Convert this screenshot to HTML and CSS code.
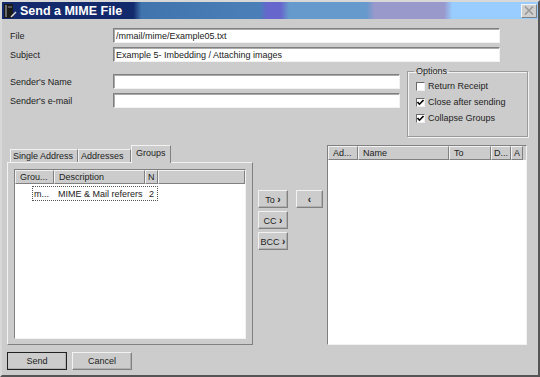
FILE: index.html
```html
<!DOCTYPE html>
<html lang="en">
<head>
  <meta charset="UTF-8">
  <meta name="viewport" content="width=device-width, initial-scale=1.0">
  <title>Send a MIME File</title>
  <link rel="stylesheet" href="styles.css">
</head>
<body>
  <div class="window">
    <div class="titlebar">
      <svg class="app-icon" width="14" height="16" viewBox="0 0 14 16">
        <rect x="1" y="1" width="9" height="14" fill="#1a1a1a"/>
        <rect x="2" y="2" width="2" height="12" fill="#6a6a6a"/>
        <rect x="5" y="3" width="4" height="2" fill="#555"/>
        <path d="M8 14 L13 9" stroke="#d8d8d8" stroke-width="1.5"/>
        <path d="M9 11 L11 13" stroke="#999" stroke-width="1"/>
      </svg>
      <span class="title">Send a MIME File</span>
      <span class="close-btn">
        <svg width="10" height="9" viewBox="0 0 10 9">
          <path d="M1 0.5 L9 8.5 M9 0.5 L1 8.5" stroke="#9a9a9a" stroke-width="1.6"/>
        </svg>
      </span>
    </div>

    <div class="content">
      <div class="field-row">
        <label class="field-label" for="file">File</label>
        <input class="text-input input-wide" id="file" value="/mmail/mime/Example05.txt">
      </div>
      <div class="field-row gap-small">
        <label class="field-label" for="subject">Subject</label>
        <input class="text-input input-wide" id="subject" value="Example 5- Imbedding / Attaching images">
      </div>

      <div class="sender-block">
        <div class="sender-fields">
          <div class="field-row">
            <label class="field-label" for="sname">Sender's Name</label>
            <input class="text-input input-mid" id="sname">
          </div>
          <div class="field-row gap-small">
            <label class="field-label" for="smail">Sender's e-mail</label>
            <input class="text-input input-mid" id="smail">
          </div>
        </div>
        <fieldset class="options">
          <legend>Options</legend>
          <div class="check-row"><span class="checkbox"></span>Return Receipt</div>
          <div class="check-row"><span class="checkbox"><svg width="7" height="7" viewBox="0 0 7 7"><path d="M0.5 3 L2.5 5.2 L6.5 1" fill="none" stroke="#000" stroke-width="1.6"/></svg></span>Close after sending</div>
          <div class="check-row"><span class="checkbox"><svg width="7" height="7" viewBox="0 0 7 7"><path d="M0.5 3 L2.5 5.2 L6.5 1" fill="none" stroke="#000" stroke-width="1.6"/></svg></span>Collapse Groups</div>
        </fieldset>
      </div>

      <div class="middle">
        <div class="tabs">
          <div class="tab-strip">
            <span class="tab">Single Address</span>
            <span class="tab">Addresses</span>
            <span class="tab tab-active">Groups</span>
          </div>
          <div class="tab-panel">
            <div class="list groups-list">
              <div class="list-header">
                <span class="head-cell col-grp">Grou...</span>
                <span class="head-cell col-desc">Description</span>
                <span class="head-cell col-n">N</span>
                <span class="head-cell col-fill"></span>
              </div>
              <div class="list-row">
                <span class="row-item">
                  <span class="cell-grp">m...</span>
                  <span class="cell-desc">MIME &amp; Mail referers</span>
                  <span class="cell-n">2</span>
                </span>
              </div>
            </div>
          </div>
        </div>

        <div class="move-buttons">
          <button class="btn btn-move">To <b>›</b></button>
          <button class="btn btn-move">CC <b>›</b></button>
          <button class="btn btn-move">BCC <b>›</b></button>
        </div>

        <div class="back-button">
          <button class="btn btn-back"><b>‹</b></button>
        </div>

        <div class="list recipients-list">
          <div class="list-header">
            <span class="head-cell col-ad">Ad...</span>
            <span class="head-cell col-name">Name</span>
            <span class="head-cell col-to">To</span>
            <span class="head-cell col-d">D...</span>
            <span class="head-cell col-a">A</span>
          </div>
        </div>
      </div>

      <div class="footer">
        <button class="btn btn-footer btn-default">Send</button>
        <button class="btn btn-footer">Cancel</button>
      </div>
    </div>
  </div>
</body>
</html>
```

FILE: styles.css
```css
body {
  margin: 0;
  font-family: "Liberation Sans", Arial, sans-serif;
  font-size: 9px;
  color: #222;
  background: #cccccc;
}
.window {
  width: 540px;
  height: 377px;
  box-sizing: border-box;
  border: 2px solid;
  border-color: #d8d8d8 #555 #555 #d8d8d8;
  background: #cccccc;
  overflow: hidden;
}

/* title bar */
.titlebar {
  height: 17px;
  display: flex;
  align-items: center;
  background: linear-gradient(to right,
    #12296c 0%, #12296c 24.5%,
    #4174ad 26%, #4a7fb8 48%,
    #6666cc 49.5%, #6666cc 52%,
    #6699cc 53.5%, #6699cc 68%,
    #9999cc 69.5%, #9999cc 82.5%,
    #99ccff 84%, #99ccff 100%);
}
.app-icon {
  margin-left: 1px;
  flex: none;
}
.title {
  margin-left: 3px;
  color: #fff;
  font-weight: bold;
  font-size: 12.5px;
}
.close-btn {
  margin-left: auto;
  margin-right: 1px;
  width: 16px;
  height: 14px;
  box-sizing: border-box;
  display: flex;
  align-items: center;
  justify-content: center;
  background: #cfcfcf;
  border: 1px solid;
  border-color: #f4f4f4 #808080 #808080 #f4f4f4;
}

/* form rows */
.content {
  padding: 9px 10px 0 5px;
}
.field-row {
  display: flex;
  align-items: center;
  height: 15px;
}
.gap-small {
  margin-top: 4px;
}
.field-label {
  width: 103px;
  margin-left: 3px;
  flex: none;
}
.text-input {
  height: 15px;
  box-sizing: border-box;
  margin: 0;
  padding: 0 2px;
  font: inherit;
  color: #222;
  background: #fff;
  border: 1px solid;
  border-color: #808080 #f2f2f2 #f2f2f2 #808080;
  box-shadow: inset 1px 1px 0 #aaaaaa;
  outline: none;
}
.input-wide {
  width: 387px;
}
.input-mid {
  width: 287px;
}

/* sender + options */
.sender-block {
  display: flex;
  margin-top: 4px;
}
.sender-fields {
  width: 393px;
  padding-top: 8px;
}
.options {
  margin: 0 0 0 7px;
  width: 121px;
  height: 71px;
  box-sizing: border-box;
  padding: 1px 0 0 8px;
  border: 1px solid #9a9a9a;
  box-shadow: inset 1px 1px 0 #f2f2f2, 1px 1px 0 #f2f2f2;
}
.options legend {
  padding: 0 2px;
  margin-left: -2px;
  line-height: 11px;
}
.check-row {
  display: flex;
  align-items: center;
  height: 16px;
}
.checkbox {
  width: 9px;
  height: 9px;
  box-sizing: border-box;
  margin-right: 3px;
  display: flex;
  align-items: center;
  justify-content: center;
  background: #fff;
  border: 1px solid;
  border-color: #6a6a6a #eee #eee #6a6a6a;
}

/* middle area */
.middle {
  display: flex;
  margin-top: 8px;
  height: 200px;
}
.tabs {
  width: 246px;
  display: flex;
  flex-direction: column;
}
.tab-strip {
  display: flex;
  align-items: flex-end;
  height: 17px;
  padding-left: 3px;
  position: relative;
  z-index: 1;
}
.tab {
  height: 13px;
  box-sizing: border-box;
  padding: 0 2px;
  line-height: 12px;
  border: 1px solid;
  border-bottom: none;
  border-color: #f2f2f2 #808080 #f2f2f2 #f2f2f2;
  background: #cccccc;
}
.tab:nth-child(1) {
  width: 68px;
}
.tab:nth-child(2) {
  width: 53px;
}
.tab-active {
  width: 40px;
  height: 18px;
  margin-bottom: -1px;
  line-height: 14px;
  padding-left: 4px;
}
.tab-panel {
  flex: 1;
  padding: 6px 6px 5px 6px;
  border: 1px solid;
  border-color: #f2f2f2 #808080 #808080 #f2f2f2;
  display: flex;
}

.list {
  background: #fff;
  border: 1px solid;
  border-color: #808080 #f2f2f2 #f2f2f2 #808080;
  box-sizing: border-box;
  overflow: hidden;
}
.groups-list {
  flex: 1;
}
.list-header {
  display: flex;
  height: 14px;
  background: #cccccc;
}
.head-cell {
  height: 14px;
  box-sizing: border-box;
  padding: 0 4px;
  line-height: 13px;
  white-space: nowrap;
  overflow: hidden;
  border: 1px solid;
  border-color: #f2f2f2 #808080 #808080 #f2f2f2;
}
.col-grp { width: 39px; }
.col-desc { width: 91px; }
.col-n { width: 13px; padding: 0 2px; }
.col-fill { flex: 1; }

.list-row {
  padding: 2px 0 0 17px;
}
.row-item {
  display: inline-flex;
  height: 15px;
  align-items: center;
  border: 1px dotted #555;
  box-sizing: border-box;
  width: 126px;
}
.cell-grp { width: 24px; padding-left: 1px; }
.cell-desc { width: 91px; }
.cell-n { width: 8px; }

/* buttons */
.btn {
  font: inherit;
  color: #222;
  background: #cccccc;
  margin: 0;
  padding: 0;
  height: 18px;
  box-sizing: border-box;
  border: 1px solid;
  border-color: #f2f2f2 #808080 #808080 #f2f2f2;
  box-shadow: inset -1px -1px 0 #b0b0b0;
}
.btn b {
  font-size: 10px;
}
.move-buttons {
  display: flex;
  flex-direction: column;
  gap: 3px;
  padding-top: 45px;
  margin-left: 5px;
}
.btn-move {
  width: 30px;
}
.back-button {
  padding-top: 45px;
  margin-left: 8px;
}
.btn-back {
  width: 27px;
}
.recipients-list {
  width: 200px;
  margin-left: 4px;
}
.col-ad { width: 30px; }
.col-name { width: 91px; }
.col-to { width: 42px; }
.col-d { width: 20px; padding: 0 2px; }
.col-a { width: 12px; padding: 0 2px; }

.footer {
  display: flex;
  gap: 5px;
  margin-top: 7px;
}
.btn-footer {
  width: 60px;
}
.btn-default {
  outline: 1px solid #222;
  outline-offset: -1px;
}
```
